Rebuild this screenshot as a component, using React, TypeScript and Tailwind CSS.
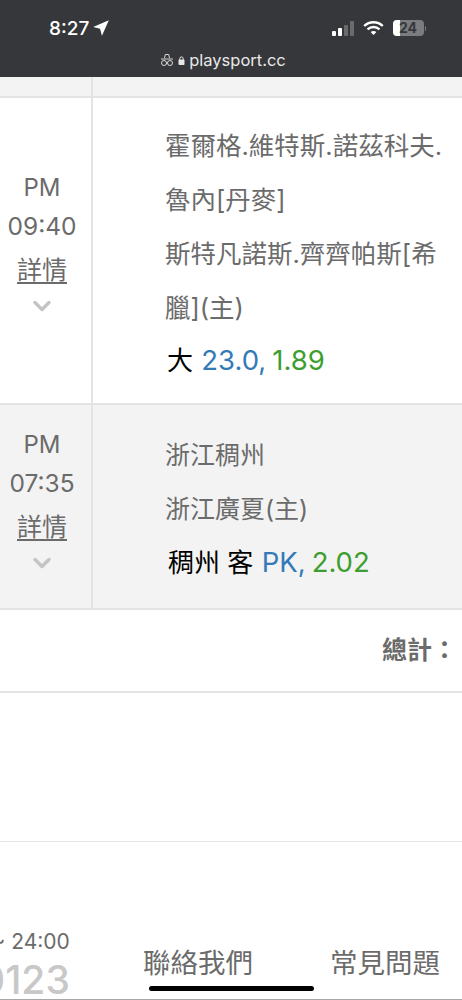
import React from "react";
import { ChevronDown } from "lucide-react";

const FONT = "font-['Inter','Noto_Sans_CJK_TC',sans-serif]";

function StatusBar() {
  return (
    <div className="h-[77px] bg-[#36373a] text-white shrink-0 relative">
      <div className="flex items-center justify-between pl-[49px] pr-[36px] pt-[17px] h-[39px]">
        <div className="flex items-center gap-[4px] text-[19px] font-medium leading-none">
          <span>8:27</span>
          <svg width="16" height="16" viewBox="0 0 15 15" fill="white">
            <path d="M14.8 0.2 L0.2 6.6 L6.6 8.2 L8.4 14.8 Z" />
          </svg>
        </div>
        <div className="flex items-center gap-[9px]">
          <div className="flex items-end gap-[2px] h-[15px]">
            <div className="w-[4px] h-[5px] rounded-[1px] bg-white" />
            <div className="w-[4px] h-[8px] rounded-[1px] bg-white" />
            <div className="w-[4px] h-[11px] rounded-[1px] bg-[#6a6b6d]" />
            <div className="w-[4px] h-[15px] rounded-[1px] bg-[#6a6b6d]" />
          </div>
          <svg width="21" height="15" viewBox="0 0 21 15" fill="none" stroke="white" strokeWidth="2.4">
            <path d="M1.2 5 C6.5 0 14.5 0 19.8 5" />
            <path d="M4.5 8.3 C8 5.2 13 5.2 16.5 8.3" />
            <path d="M10.5 14 L7.6 11 C9.3 9.7 11.7 9.7 13.4 11 Z" fill="white" stroke="none" />
          </svg>
          <div className="flex items-center">
            <div className="w-[31px] h-[16px] rounded-[4px] bg-[#7b7c7e] overflow-hidden relative flex items-center justify-center">
              <div className="absolute left-0 top-0 bottom-0 w-[7px] bg-white" />
              <span className="relative text-[14px] font-bold text-[#36373a] leading-none">24</span>
            </div>
            <div className="w-[1.5px] h-[5px] ml-[1px] rounded-r bg-[#7b7c7e]" />
          </div>
        </div>
      </div>
      <div className="flex items-center justify-center h-[22px] mt-[10px] gap-[4px] pr-[16px]">
        <svg width="14" height="14" viewBox="0 0 14 14" fill="none" stroke="#d8d8d8" strokeWidth="1">
          <path d="M4.5 5 L5.3 1.5 H8.7 L9.5 5" />
          <path d="M1 6 H13" />
          <circle cx="4" cy="10" r="2.5" />
          <circle cx="10" cy="10" r="2.5" />
          <path d="M6.5 10 H7.5" />
        </svg>
        <svg width="7" height="9" viewBox="0 0 7 9" fill="#e8e8e8">
          <rect x="0.5" y="3.5" width="6" height="5.5" rx="1" />
          <path d="M1.8 4 V2.6 a1.7 1.7 0 0 1 3.4 0 V4" fill="none" stroke="#e8e8e8" strokeWidth="1" />
        </svg>
        <span className="text-[16.5px] leading-none text-[#e8e8e8]">playsport.cc</span>
      </div>
    </div>
  );
}

function TimeCell({ time }: { time: string }) {
  return (
    <div className="w-[91px] shrink-0 flex flex-col items-center pr-[7px] text-[#6b6b6b]">
      <div className="text-[24px] leading-[38px]">PM</div>
      <div className="text-[24.5px] leading-[38px]">{time}</div>
      <div className="text-[25px] leading-[50px] underline underline-offset-[3px]">詳情</div>
      <ChevronDown size={28} strokeWidth={3} className="text-[#c4c4c4] -mt-[3px]" />
    </div>
  );
}

function Odds({ pick, line, price, indent }: { pick: string; line: string; price: string; indent: string }) {
  return (
    <div className={`text-[27.5px] leading-[52px] whitespace-nowrap ${indent}`}>
      <span className="text-black text-[26px] mr-[1px]">{pick} </span>
      <span className="text-[#337ab7]">{line},</span>
      <span className="text-[#3c9e2e] ml-[6px]">{price}</span>
    </div>
  );
}

export default function App() {
  return (
    <div className={`${FONT} w-[462px] h-[1000px] overflow-hidden bg-white flex flex-col relative`}>
      <StatusBar />

      <div className="h-[21px] bg-[#f3f3f3] border-b-2 border-[#e4e4e4] flex shrink-0">
        <div className="w-[91px] border-r-2 border-[#e4e4e4] box-content" />
      </div>

      <div className="h-[307px] flex border-b-2 border-[#e4e4e4] shrink-0">
        <div className="flex pt-[71px] border-r-2 border-[#e4e4e4] box-content">
          <TimeCell time="09:40" />
        </div>
        <div className="pl-[72px] pt-[21px] text-[25.5px] leading-[54px] text-[#6b6b6b] flex-1 min-w-0">
          <div className="whitespace-nowrap">霍爾格.維特斯.諾茲科夫.</div>
          <div>魯內[丹麥]</div>
          <div className="whitespace-nowrap">斯特凡諾斯.齊齊帕斯[希</div>
          <div>臘](主)</div>
          <Odds pick="大" line="23.0" price="1.89" indent="pl-[2px] mt-[-1px]" />
        </div>
      </div>

      <div className="h-[205px] flex bg-[#f3f3f3] border-b-2 border-[#e4e4e4] shrink-0">
        <div className="flex pt-[21px] border-r-2 border-[#e4e4e4] box-content">
          <TimeCell time="07:35" />
        </div>
        <div className="pl-[72px] pt-[23px] text-[25px] leading-[54px] text-[#6b6b6b] flex-1 min-w-0">
          <div>浙江稠州</div>
          <div>浙江廣夏(主)</div>
          <Odds pick="稠州 客" line="PK" price="2.02" indent="pl-[3px]" />
        </div>
      </div>

      <div className="h-[83px] flex items-center justify-end border-b-2 border-[#e4e4e4] shrink-0 pr-[5px] text-[25px] font-bold text-[#6b6b6b]">
        總計：
      </div>

      <div className="h-[149px] border-b border-[#e8e8e8] shrink-0" />

      <div className="flex-1 flex justify-between items-end border-b border-[#a8a8a8] pb-[16px] min-h-0">
        <div className="-ml-[20px] flex flex-col items-end -translate-y-[1px]">
          <div className="text-[21px] leading-[28px] mb-[4px] text-[#6b6b6b] whitespace-nowrap">~ 24:00</div>
          <div className="text-[39px] leading-[40px] -mb-[18px] font-medium text-[#c8c8c8] whitespace-nowrap">0123</div>
        </div>
        <div className="flex gap-[77px] pr-[22px] text-[27.5px] leading-[40px] text-[#6b6b6b] whitespace-nowrap">
          <span>聯絡我們</span>
          <span>常見問題</span>
        </div>
      </div>

      <div className="absolute left-[149px] top-[986px] w-[165px] h-[5px] rounded-full bg-black" />
    </div>
  );
}
